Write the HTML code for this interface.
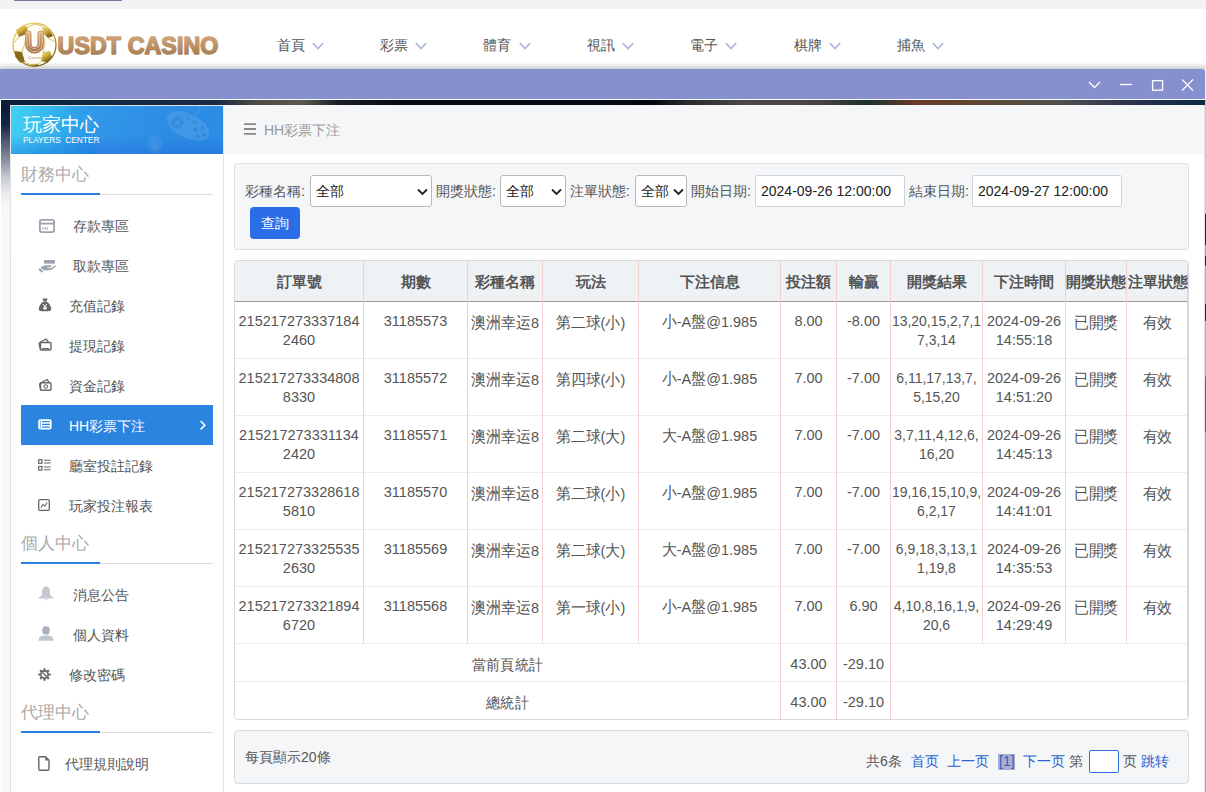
<!DOCTYPE html>
<html><head><meta charset="utf-8">
<style>
*{box-sizing:border-box;margin:0;padding:0}
html,body{width:1206px;height:792px;overflow:hidden;background:#fff;font-family:"Liberation Sans",sans-serif;color:#555;position:relative}
.a{position:absolute}
.nav{position:absolute;top:36px;font-size:14px;color:#555;line-height:18px;white-space:nowrap}
.chev{position:absolute;top:42px;width:12px;height:8px}
.side-t{position:absolute;left:21px;font-size:17px;color:#aaa;line-height:20px;white-space:nowrap}
.uline{position:absolute;left:21px;width:192px;height:1px;background:#dcdcdc}
.uline i{position:absolute;left:0;top:-1px;width:79px;height:2px;background:#2a7fe0}
.mi{position:absolute;font-size:14px;color:#555;line-height:17px;white-space:nowrap}
.ic{position:absolute}
.ic svg{display:block}
.cell{position:absolute;text-align:center;font-size:15.5px;line-height:19px;color:#555;white-space:nowrap;transform:scaleX(.935)}
.hd{position:absolute;text-align:center;font-size:15px;font-weight:bold;color:#555;line-height:18px;white-space:nowrap}
.vl{position:absolute;width:1px;background:#f5cfcf}
.hl{position:absolute;height:1px;background:#ececec}
.lbl{position:absolute;top:182px;font-size:14px;color:#555;line-height:18px;white-space:nowrap}
.sel{position:absolute;top:175px;height:32px;border:1px solid #b9b9b9;border-radius:3px;background:#fff;font-size:14px;color:#222;line-height:30px;padding-left:5px;white-space:nowrap}
.sel svg{position:absolute;top:12px}
.pg{position:absolute;top:752px;font-size:14px;line-height:18px;white-space:nowrap;color:#555}
.lk{color:#2d5fd0}
</style></head><body>

<div class="a" style="left:0;top:0;width:1206px;height:9px;background:#f2f2f2"></div>
<div class="a" style="left:14px;top:0;width:108px;height:1px;background:#717899"></div>
<div class="a" style="left:0;top:62px;width:1206px;height:7px;background:linear-gradient(#fff,#e6e6e6)"></div>
<svg class="a" style="left:11px;top:21px" width="48" height="48" viewBox="0 0 48 48">
<defs>
<linearGradient id="gold" x1="0" y1="0" x2="0.6" y2="1"><stop offset="0" stop-color="#f0d878"/><stop offset="0.5" stop-color="#d2b040"/><stop offset="1" stop-color="#6e5212"/></linearGradient>
<linearGradient id="ug" x1="0" y1="0" x2="0" y2="1"><stop offset="0" stop-color="#d9a67c"/><stop offset="1" stop-color="#a67850"/></linearGradient>
<linearGradient id="tg" x1="0" y1="0" x2="0" y2="1"><stop offset="0" stop-color="#d8a97e"/><stop offset="1" stop-color="#9e764e"/></linearGradient>
</defs>
<circle cx="23.5" cy="23.7" r="21.5" fill="#fffef6" stroke="url(#gold)" stroke-width="1.2"/>
<g fill="url(#gold)">
<path d="M5 9 L12 4.5 L17 6 L15 13 L8 16 Z"/>
<path d="M31 5 L38 8.5 L42 15 L37 17 L32 12 Z"/>
<path d="M3.5 30 L11 31 L14 41 L9 41.5 L4.5 36 Z" fill="#8a6a1c"/>
<path d="M32 31 L39 30 L41 36 L36.5 41.5 L30 40 Z"/>
<path d="M18 43 L28 42.5 L27 45.3 L20 45.3 Z"/>
</g>
<g stroke="#d8bb58" stroke-width="0.9" fill="none">
<path d="M17 6 L24 3 L31 5 M15 13 L14 22 M32 12 L34 22 M8 16 L3 22 M37 17 L44 21 M11 31 L14 22 M34 22 L32 31 M14 41 L18 43 M28 42.5 L30 40"/>
</g>
<path d="M17.3 12.8 V23 A6.2 6.2 0 0 0 29.7 23 V12.8" fill="none" stroke="url(#ug)" stroke-width="6.6" stroke-linecap="round"/>
<path d="M17.3 12.8 V23 A6.2 6.2 0 0 0 29.7 23 V12.8" fill="none" stroke="#f2d9bc" stroke-width="3.4" stroke-linecap="round"/>
<path d="M17.3 12.8 V23 A6.2 6.2 0 0 0 29.7 23 V12.8" fill="none" stroke="url(#ug)" stroke-width="2.2" stroke-linecap="round"/>
<text x="23.5" y="37.5" font-size="4.2" fill="#b08860" text-anchor="middle" font-family="Liberation Sans">Casino</text>
</svg>
<svg class="a" style="left:55px;top:30px" width="175" height="30" viewBox="0 0 175 30"><text x="2.6" y="24.2" font-family="Liberation Sans" font-size="23.2" font-weight="bold" letter-spacing="0.1" fill="url(#tg)" stroke="url(#tg)" stroke-width="1.5" stroke-linejoin="round">USDT CASINO</text></svg>
<div class="nav" style="left:276.5px">首頁</div>
<svg class="chev" style="left:311.7px" viewBox="0 0 12 8"><path d="M0.8 1 L6 6.5 L11.2 1" fill="none" stroke="#aab4d6" stroke-width="1.6"/></svg>
<div class="nav" style="left:379.9px">彩票</div>
<svg class="chev" style="left:415.1px" viewBox="0 0 12 8"><path d="M0.8 1 L6 6.5 L11.2 1" fill="none" stroke="#aab4d6" stroke-width="1.6"/></svg>
<div class="nav" style="left:483.3px">體育</div>
<svg class="chev" style="left:518.5px" viewBox="0 0 12 8"><path d="M0.8 1 L6 6.5 L11.2 1" fill="none" stroke="#aab4d6" stroke-width="1.6"/></svg>
<div class="nav" style="left:586.7px">視訊</div>
<svg class="chev" style="left:621.9px" viewBox="0 0 12 8"><path d="M0.8 1 L6 6.5 L11.2 1" fill="none" stroke="#aab4d6" stroke-width="1.6"/></svg>
<div class="nav" style="left:690.1px">電子</div>
<svg class="chev" style="left:725.3px" viewBox="0 0 12 8"><path d="M0.8 1 L6 6.5 L11.2 1" fill="none" stroke="#aab4d6" stroke-width="1.6"/></svg>
<div class="nav" style="left:793.5px">棋牌</div>
<svg class="chev" style="left:828.7px" viewBox="0 0 12 8"><path d="M0.8 1 L6 6.5 L11.2 1" fill="none" stroke="#aab4d6" stroke-width="1.6"/></svg>
<div class="nav" style="left:896.9px">捕魚</div>
<svg class="chev" style="left:932.1px" viewBox="0 0 12 8"><path d="M0.8 1 L6 6.5 L11.2 1" fill="none" stroke="#aab4d6" stroke-width="1.6"/></svg>
<div class="a" style="left:0;top:69px;width:1205px;height:30px;background:#8690cf;border-radius:0 3px 0 0;box-shadow:0 -2px 5px rgba(0,0,0,0.12)"></div>
<div class="a" style="left:0;top:99px;width:1205px;height:1px;background:#fff"></div>
<svg class="a" style="left:1086px;top:78px" width="112" height="14" viewBox="0 0 112 14"><path d="M3 4 L8.5 9.5 L14 4" fill="none" stroke="#fff" stroke-width="1.3"/><path d="M34 6.5 L46 6.5" stroke="#fff" stroke-width="1.3"/><rect x="66.6" y="2.6" width="10" height="9.6" fill="none" stroke="#fff" stroke-width="1.3"/><path d="M96 1.5 L107 12.5 M107 1.5 L96 12.5" stroke="#fff" stroke-width="1.2"/></svg>
<div class="a" style="left:1px;top:100px;width:1204px;height:5px;background:linear-gradient(90deg,#0a1e3a 0%,#0b2846 6%,#13284a 12%,#1a2a48 18%,#4a4a44 21%,#5a5a4e 25%,#1a1e2a 28%,#060b18 33%,#060a18 50%,#050510 54%,#2a2a30 57%,#4a4a48 62%,#4a4242 68%,#1a3030 72%,#6a3a28 76%,#5a4a3a 83%,#505050 88%,#2a3050 94%,#0a2a4a 100%)"></div>
<div class="a" style="left:1px;top:105px;width:9px;height:687px;background:linear-gradient(#0a1a3a 0%,#14264a 2.9%,#4a5570 5.1%,#8890a0 8%,#c8ccd4 10.6%,#eceef0 13.1%,#f7f7f8 15%,#f8f8f8 100%)"></div>
<div class="a" style="left:10px;top:105px;width:214px;height:687px;background:#fff;border:1px solid #e3e3e3;border-bottom:none"></div>
<div class="a" style="left:11px;top:106px;width:212px;height:48px;overflow:hidden;background:linear-gradient(100deg,#42d2f5 0%,#32b0ee 22%,#2a93e8 40%,#2489e4 70%,#2388e4 100%)">
<div class="a" style="left:0;top:0;width:212px;height:48px;background:linear-gradient(rgba(255,255,255,0) 60%,rgba(20,90,210,0.35) 100%)"></div>
<div class="a" style="left:90px;top:-40px;width:200px;height:140px;transform:rotate(-25deg);background:rgba(255,255,255,0.04)"></div>
<svg class="a" style="left:0;top:0" width="212" height="48" viewBox="0 0 212 48">
<g transform="rotate(27 177 20)"><ellipse cx="177" cy="20" rx="23" ry="12" fill="#ffffff" fill-opacity="0.1"/></g>
<circle cx="166.4" cy="16.3" r="6" fill="#1a6fd8" fill-opacity="0.35"/>
<path d="M163 13 L170 19.6 M170 13 L163 19.6" stroke="#ffffff" stroke-opacity="0.12" stroke-width="1.5"/>
<path d="M176 12 L179 14 M182 15 L185 17" stroke="#1a6fd8" stroke-opacity="0.35" stroke-width="1.6"/>
<g fill="#1a6fd8" fill-opacity="0.35"><circle cx="184.3" cy="23.5" r="2"/><circle cx="191.3" cy="21.8" r="2"/><circle cx="186.5" cy="30.6" r="2"/><circle cx="193" cy="29" r="2"/></g>
<path d="M183 9 C184 6 188 8 189 5 C190 3 188 2 186 1" fill="none" stroke="#ffffff" stroke-opacity="0.15" stroke-width="1"/>
<circle cx="144" cy="38.6" r="8.5" fill="#ffffff" fill-opacity="0.06"/>
<circle cx="144" cy="40" r="4" fill="#ffffff" fill-opacity="0.05"/>
</svg>
<div class="a" style="left:12px;top:9px;font-size:18.5px;color:#fff;line-height:20px;white-space:nowrap">玩家中心</div>
<div class="a" style="left:12px;top:29px;font-size:8.3px;color:#fff;line-height:10px;letter-spacing:0px;white-space:nowrap">PLAYERS&nbsp;&nbsp;CENTER</div>
</div>
<div class="side-t" style="top:165px">財務中心</div>
<div class="uline" style="top:194px"><i></i></div>
<div class="side-t" style="top:534px">個人中心</div>
<div class="uline" style="top:563px"><i></i></div>
<div class="side-t" style="top:703px">代理中心</div>
<div class="uline" style="top:732px"><i></i></div>
<div class="a" style="left:21px;top:405px;width:192px;height:40px;background:#2a84e0"></div>
<div class="ic" style="left:39px;top:219px"><svg width="16" height="14" viewBox="0 0 16 14"><rect x="0.9" y="0.9" width="14.2" height="12.2" rx="2" fill="none" stroke="#9aa3ad" stroke-width="1.8"/><path d="M1 4.6 H15" stroke="#9aa3ad" stroke-width="1.8"/><path d="M3.8 8 V10.8 M6 8 V10.8 M8.2 8 V10.8" stroke="#9aa3ad" stroke-width="1"/></svg></div>
<div class="mi" style="left:73px;top:218px;color:#555">存款專區</div>
<div class="ic" style="left:38px;top:259px"><svg width="18" height="14" viewBox="0 0 18 14"><rect x="6" y="1" width="11" height="3.6" fill="#9aa3ad"/><path d="M0.3 10.6 L1.8 9.1 L5.2 12.3 L3.7 13.8 Z" fill="#9aa3ad"/><path d="M2.6 8.6 C5 6.3 8 6 11 6.2 L12.8 6.5 C13.9 6.8 13.8 8.1 12.7 8.2 L9 8.3 L9.6 9.2 L13.8 8.9 L17.2 6.4 C17.8 6 18.3 6.6 17.8 7.3 C16 9.6 14 11 11 11.2 L5.6 11.3 Z" fill="#9aa3ad"/></svg></div>
<div class="mi" style="left:73px;top:258px;color:#555">取款專區</div>
<div class="ic" style="left:38px;top:298px"><svg width="14" height="14" viewBox="0 0 14 14"><path d="M4.3 0.6 H9.7 L8.4 3.2 H5.6 Z" fill="#666"/><path d="M5.5 3.6 H8.5 C11.5 5.5 13.2 8.5 13.2 11 C13.2 13 12 13.3 7 13.3 C2 13.3 0.8 13 0.8 11 C0.8 8.5 2.5 5.5 5.5 3.6 Z" fill="#666"/><path d="M5 6 L7 8.3 L9 6 M7 8.3 V12 M5.2 9.2 H8.8 M5.2 10.6 H8.8" fill="none" stroke="#fff" stroke-width="1"/></svg></div>
<div class="mi" style="left:69px;top:298px;color:#555">充值記錄</div>
<div class="ic" style="left:38px;top:338px"><svg width="14" height="13" viewBox="0 0 14 13"><path d="M1 5 L8 1 L10.5 4" fill="none" stroke="#666" stroke-width="1.3"/><rect x="2.5" y="4.5" width="10.5" height="7.5" rx="1" fill="none" stroke="#666" stroke-width="1.4"/><path d="M1 5 L2.5 12" stroke="#666" stroke-width="1.3"/><rect x="4" y="10" width="7" height="1.3" fill="#666"/></svg></div>
<div class="mi" style="left:69px;top:338px;color:#555">提現記錄</div>
<div class="ic" style="left:38px;top:378px"><svg width="14" height="13" viewBox="0 0 14 13"><path d="M1.5 5.5 L9 1.5 L11 4" fill="none" stroke="#666" stroke-width="1.3"/><rect x="2.5" y="4.8" width="10.5" height="7.5" rx="1" fill="none" stroke="#666" stroke-width="1.4"/><circle cx="7.7" cy="8.5" r="1.8" fill="none" stroke="#666" stroke-width="1.1"/><path d="M1.5 5.5 L2.5 12" stroke="#666" stroke-width="1.2"/></svg></div>
<div class="mi" style="left:69px;top:378px;color:#555">資金記錄</div>
<div class="ic" style="left:38px;top:419px"><svg width="14" height="11" viewBox="0 0 14 11"><rect x="0.2" y="0.2" width="13.4" height="10.4" rx="2" fill="#fff"/><path d="M4 2.6 H11.8 M4 5.4 H11.8 M4 8.2 H11.8" stroke="#2a84e0" stroke-width="1.2"/><path d="M2.6 1.5 V9.5" stroke="#2a84e0" stroke-width="0.6"/></svg></div>
<div class="mi" style="left:69px;top:418px;color:#fff">HH彩票下注</div>
<div class="ic" style="left:38px;top:459px"><svg width="13" height="12" viewBox="0 0 13 12"><rect x="0.7" y="0.7" width="3.2" height="3.6" fill="none" stroke="#666" stroke-width="1.2"/><rect x="0.7" y="7.5" width="3.2" height="3.6" fill="none" stroke="#666" stroke-width="1.2"/><path d="M6 1.3 H12.5 M6 4 H12.5 M6 8 H12.5 M6 10.8 H12.5" stroke="#666" stroke-width="1.1"/></svg></div>
<div class="mi" style="left:69px;top:458px;color:#555">廳室投註記錄</div>
<div class="ic" style="left:38px;top:499px"><svg width="12" height="12" viewBox="0 0 12 12"><rect x="0.7" y="0.7" width="10.6" height="10.6" rx="1" fill="none" stroke="#666" stroke-width="1.3"/><path d="M2.8 8.8 L5 5.5 L6.8 7.2 L9.2 3.5" fill="none" stroke="#666" stroke-width="1.1"/></svg></div>
<div class="mi" style="left:69px;top:498px;color:#555">玩家投注報表</div>
<div class="ic" style="left:38px;top:586px"><svg width="16" height="15" viewBox="0 0 16 15"><path d="M8 0.6 C5 0.6 4 3 4 6 L4 9.3 L0.6 11.8 V12.6 H15.4 V11.8 L12 9.3 L12 6 C12 3 11 0.6 8 0.6 Z" fill="#c3c8ce"/><path d="M6.3 13.3 H9.7 L8 14.6 Z" fill="#c3c8ce"/></svg></div>
<div class="mi" style="left:73px;top:587px;color:#555">消息公告</div>
<div class="ic" style="left:38px;top:626px"><svg width="16" height="15" viewBox="0 0 16 15"><ellipse cx="8" cy="4.4" rx="3.8" ry="4.2" fill="#a9b0b9"/><path d="M0.5 14.8 C0.5 10.5 3.5 9.5 8 9.5 C12.5 9.5 15.5 10.5 15.5 14.8 Z" fill="#c0c6cd"/></svg></div>
<div class="mi" style="left:73px;top:627px;color:#555">個人資料</div>
<div class="ic" style="left:38px;top:668px"><svg width="13" height="13" viewBox="0 0 13 13"><g fill="#666"><rect x="5.4" y="0.2" width="2.2" height="12.6" rx="0.6"/><rect x="0.2" y="5.4" width="12.6" height="2.2" rx="0.6"/><rect x="5.4" y="0.2" width="2.2" height="12.6" rx="0.6" transform="rotate(45 6.5 6.5)"/><rect x="5.4" y="0.2" width="2.2" height="12.6" rx="0.6" transform="rotate(-45 6.5 6.5)"/></g><circle cx="6.5" cy="6.5" r="3.6" fill="#fff" stroke="#666" stroke-width="1.6"/><path d="M4.6 4.6 L8.6 8.6" stroke="#666" stroke-width="1.4"/></svg></div>
<div class="mi" style="left:69px;top:667px;color:#555">修改密碼</div>
<div class="ic" style="left:38px;top:756px"><svg width="12" height="15" viewBox="0 0 12 15"><path d="M1.8 0.8 H7.5 L11 4.3 V13 A1.2 1.2 0 0 1 9.8 14.2 H2 A1.2 1.2 0 0 1 0.8 13 V2 A1.2 1.2 0 0 1 1.8 0.8 Z" fill="none" stroke="#666" stroke-width="1.4"/><path d="M7.3 0.8 V4.5 H11" fill="#666"/></svg></div>
<div class="mi" style="left:65px;top:756px;color:#555">代理規則說明</div>
<svg class="a" style="left:199px;top:419px" width="8" height="12" viewBox="0 0 8 12"><path d="M1.6 2 L5.8 6.2 L1.6 10.4" fill="none" stroke="#fff" stroke-width="1.6"/></svg>
<div class="a" style="left:224px;top:105px;width:981px;height:49px;background:#f5f6f8"></div>
<svg class="a" style="left:244px;top:123px" width="12" height="12" viewBox="0 0 12 12"><path d="M0 1.2 H12 M0 6 H12 M0 10.8 H12" stroke="#888" stroke-width="1.8"/></svg>
<div class="a" style="left:264px;top:121px;font-size:14px;color:#999;line-height:18px;white-space:nowrap">HH彩票下注</div>
<div class="a" style="left:234px;top:163px;width:955px;height:87px;background:#f5f6f8;border:1px solid #dcdfe3;border-radius:3px"></div>
<div class="lbl" style="left:245px">彩種名稱:</div>
<div class="sel" style="left:310px;width:122px">全部<svg style="left:106px" width="11" height="8" viewBox="0 0 11 8"><path d="M1 1.5 L5.5 6 L10 1.5" fill="none" stroke="#222" stroke-width="1.8"/></svg></div>
<div class="lbl" style="left:436px">開獎狀態:</div>
<div class="sel" style="left:500px;width:66px">全部<svg style="left:50px" width="11" height="8" viewBox="0 0 11 8"><path d="M1 1.5 L5.5 6 L10 1.5" fill="none" stroke="#222" stroke-width="1.8"/></svg></div>
<div class="lbl" style="left:570px">注單狀態:</div>
<div class="sel" style="left:635px;width:52px">全部<svg style="left:37px" width="11" height="8" viewBox="0 0 11 8"><path d="M1 1.5 L5.5 6 L10 1.5" fill="none" stroke="#222" stroke-width="1.8"/></svg></div>
<div class="lbl" style="left:691px">開始日期:</div>
<div class="sel" style="left:755px;width:150px;border-color:#ced4da;border-radius:2px">2024-09-26 12:00:00</div>
<div class="lbl" style="left:909px">結束日期:</div>
<div class="sel" style="left:972px;width:150px;border-color:#ced4da;border-radius:2px">2024-09-27 12:00:00</div>
<div class="a" style="left:250px;top:207px;width:50px;height:32px;background:#2b6de6;border-radius:4px;color:#fff;font-size:14px;line-height:32px;text-align:center">查詢</div>
<div class="a" style="left:234px;top:260px;width:955px;height:460px;border:1px solid #d5dadf;border-radius:4px;background:#fff"></div>
<div class="a" style="left:235px;top:261px;width:953px;height:40px;background:#eef2f5;border-radius:3px 3px 0 0"></div>
<div class="a" style="left:235px;top:301px;width:953px;height:1px;background:#9e9696"></div>
<div class="hl" style="left:235px;top:358px;width:953px"></div>
<div class="hl" style="left:235px;top:415px;width:953px"></div>
<div class="hl" style="left:235px;top:472px;width:953px"></div>
<div class="hl" style="left:235px;top:529px;width:953px"></div>
<div class="hl" style="left:235px;top:586px;width:953px"></div>
<div class="hl" style="left:235px;top:643px;width:953px"></div>
<div class="hl" style="left:235px;top:681px;width:953px"></div>
<div class="vl" style="left:363px;top:261px;height:382px"></div>
<div class="vl" style="left:467px;top:261px;height:382px"></div>
<div class="vl" style="left:542px;top:261px;height:382px"></div>
<div class="vl" style="left:638px;top:261px;height:382px"></div>
<div class="vl" style="left:780px;top:261px;height:458px"></div>
<div class="vl" style="left:836px;top:261px;height:458px"></div>
<div class="vl" style="left:890px;top:261px;height:458px"></div>
<div class="vl" style="left:982px;top:261px;height:382px"></div>
<div class="vl" style="left:1065px;top:261px;height:382px"></div>
<div class="vl" style="left:1126px;top:261px;height:382px"></div>
<div class="vl" style="left:1187px;top:265px;height:451px"></div>
<div class="hd" style="left:235px;width:128px;top:273px">訂單號</div>
<div class="hd" style="left:364px;width:103px;top:273px">期數</div>
<div class="hd" style="left:468px;width:74px;top:273px">彩種名稱</div>
<div class="hd" style="left:543px;width:95px;top:273px">玩法</div>
<div class="hd" style="left:639px;width:141px;top:273px">下注信息</div>
<div class="hd" style="left:781px;width:55px;top:273px">投注額</div>
<div class="hd" style="left:837px;width:53px;top:273px">輸贏</div>
<div class="hd" style="left:891px;width:91px;top:273px">開獎結果</div>
<div class="hd" style="left:983px;width:82px;top:273px">下注時間</div>
<div class="hd" style="left:1066px;width:60px;top:273px">開獎狀態</div>
<div class="hd" style="left:1127px;width:61px;top:273px">注單狀態</div>
<div class="cell" style="left:225px;width:148px;top:311.3px">215217273337184<br>2460</div>
<div class="cell" style="left:354px;width:123px;top:311.3px">31185573</div>
<div class="cell" style="left:458px;width:94px;top:312.8px">澳洲幸运8</div>
<div class="cell" style="left:533px;width:115px;top:312.8px">第二球(小)</div>
<div class="cell" style="left:629px;width:161px;top:311.8px">小-A盤@1.985</div>
<div class="cell" style="left:771px;width:75px;top:311.3px">8.00</div>
<div class="cell" style="left:827px;width:73px;top:311.3px">-8.00</div>
<div class="cell" style="left:881px;width:111px;top:311.3px;transform:scaleX(.9)">13,20,15,2,7,1<br>7,3,14</div>
<div class="cell" style="left:973px;width:102px;top:311.3px">2024-09-26<br>14:55:18</div>
<div class="cell" style="left:1056px;width:80px;top:312.8px">已開獎</div>
<div class="cell" style="left:1117px;width:81px;top:312.8px">有效</div>
<div class="cell" style="left:225px;width:148px;top:368.3px">215217273334808<br>8330</div>
<div class="cell" style="left:354px;width:123px;top:368.3px">31185572</div>
<div class="cell" style="left:458px;width:94px;top:369.8px">澳洲幸运8</div>
<div class="cell" style="left:533px;width:115px;top:369.8px">第四球(小)</div>
<div class="cell" style="left:629px;width:161px;top:368.8px">小-A盤@1.985</div>
<div class="cell" style="left:771px;width:75px;top:368.3px">7.00</div>
<div class="cell" style="left:827px;width:73px;top:368.3px">-7.00</div>
<div class="cell" style="left:881px;width:111px;top:368.3px;transform:scaleX(.9)">6,11,17,13,7,<br>5,15,20</div>
<div class="cell" style="left:973px;width:102px;top:368.3px">2024-09-26<br>14:51:20</div>
<div class="cell" style="left:1056px;width:80px;top:369.8px">已開獎</div>
<div class="cell" style="left:1117px;width:81px;top:369.8px">有效</div>
<div class="cell" style="left:225px;width:148px;top:425.3px">215217273331134<br>2420</div>
<div class="cell" style="left:354px;width:123px;top:425.3px">31185571</div>
<div class="cell" style="left:458px;width:94px;top:426.8px">澳洲幸运8</div>
<div class="cell" style="left:533px;width:115px;top:426.8px">第二球(大)</div>
<div class="cell" style="left:629px;width:161px;top:425.8px">大-A盤@1.985</div>
<div class="cell" style="left:771px;width:75px;top:425.3px">7.00</div>
<div class="cell" style="left:827px;width:73px;top:425.3px">-7.00</div>
<div class="cell" style="left:881px;width:111px;top:425.3px;transform:scaleX(.9)">3,7,11,4,12,6,<br>16,20</div>
<div class="cell" style="left:973px;width:102px;top:425.3px">2024-09-26<br>14:45:13</div>
<div class="cell" style="left:1056px;width:80px;top:426.8px">已開獎</div>
<div class="cell" style="left:1117px;width:81px;top:426.8px">有效</div>
<div class="cell" style="left:225px;width:148px;top:482.3px">215217273328618<br>5810</div>
<div class="cell" style="left:354px;width:123px;top:482.3px">31185570</div>
<div class="cell" style="left:458px;width:94px;top:483.8px">澳洲幸运8</div>
<div class="cell" style="left:533px;width:115px;top:483.8px">第二球(小)</div>
<div class="cell" style="left:629px;width:161px;top:482.8px">小-A盤@1.985</div>
<div class="cell" style="left:771px;width:75px;top:482.3px">7.00</div>
<div class="cell" style="left:827px;width:73px;top:482.3px">-7.00</div>
<div class="cell" style="left:881px;width:111px;top:482.3px;transform:scaleX(.9)">19,16,15,10,9,<br>6,2,17</div>
<div class="cell" style="left:973px;width:102px;top:482.3px">2024-09-26<br>14:41:01</div>
<div class="cell" style="left:1056px;width:80px;top:483.8px">已開獎</div>
<div class="cell" style="left:1117px;width:81px;top:483.8px">有效</div>
<div class="cell" style="left:225px;width:148px;top:539.3px">215217273325535<br>2630</div>
<div class="cell" style="left:354px;width:123px;top:539.3px">31185569</div>
<div class="cell" style="left:458px;width:94px;top:540.8px">澳洲幸运8</div>
<div class="cell" style="left:533px;width:115px;top:540.8px">第二球(大)</div>
<div class="cell" style="left:629px;width:161px;top:539.8px">大-A盤@1.985</div>
<div class="cell" style="left:771px;width:75px;top:539.3px">7.00</div>
<div class="cell" style="left:827px;width:73px;top:539.3px">-7.00</div>
<div class="cell" style="left:881px;width:111px;top:539.3px;transform:scaleX(.9)">6,9,18,3,13,1<br>1,19,8</div>
<div class="cell" style="left:973px;width:102px;top:539.3px">2024-09-26<br>14:35:53</div>
<div class="cell" style="left:1056px;width:80px;top:540.8px">已開獎</div>
<div class="cell" style="left:1117px;width:81px;top:540.8px">有效</div>
<div class="cell" style="left:225px;width:148px;top:596.3px">215217273321894<br>6720</div>
<div class="cell" style="left:354px;width:123px;top:596.3px">31185568</div>
<div class="cell" style="left:458px;width:94px;top:597.8px">澳洲幸运8</div>
<div class="cell" style="left:533px;width:115px;top:597.8px">第一球(小)</div>
<div class="cell" style="left:629px;width:161px;top:596.8px">小-A盤@1.985</div>
<div class="cell" style="left:771px;width:75px;top:596.3px">7.00</div>
<div class="cell" style="left:827px;width:73px;top:596.3px">6.90</div>
<div class="cell" style="left:881px;width:111px;top:596.3px;transform:scaleX(.9)">4,10,8,16,1,9,<br>20,6</div>
<div class="cell" style="left:973px;width:102px;top:596.3px">2024-09-26<br>14:29:49</div>
<div class="cell" style="left:1056px;width:80px;top:597.8px">已開獎</div>
<div class="cell" style="left:1117px;width:81px;top:597.8px">有效</div>
<div class="cell" style="left:235px;width:545px;top:655px;font-size:15px">當前頁統計</div>
<div class="cell" style="left:781px;width:55px;top:654px">43.00</div>
<div class="cell" style="left:837px;width:53px;top:654px">-29.10</div>
<div class="cell" style="left:235px;width:545px;top:693px;font-size:15px">總統計</div>
<div class="cell" style="left:781px;width:55px;top:692px">43.00</div>
<div class="cell" style="left:837px;width:53px;top:692px">-29.10</div>
<div class="a" style="left:234px;top:730px;width:955px;height:54px;background:#f5f6f8;border:1px solid #d5dadf;border-radius:4px"></div>
<div class="pg" style="left:245px;top:748px">每頁顯示20條</div>
<div class="pg" style="left:866px">共6条</div>
<div class="pg lk" style="left:911px">首页</div>
<div class="pg lk" style="left:947px">上一页</div>
<div class="a" style="left:998px;top:754px;width:17px;height:16px;background:#aab0c9"></div>
<div class="pg lk" style="left:999px">[1]</div>
<div class="pg lk" style="left:1023px">下一页</div>
<div class="pg" style="left:1069px">第</div>
<div class="a" style="left:1089px;top:750px;width:30px;height:23px;border:1px solid #2d6fe0;border-radius:2px;background:#fff"></div>
<div class="pg" style="left:1123px">页</div>
<div class="pg lk" style="left:1141px">跳转</div>
<div class="a" style="left:1204px;top:105px;width:1px;height:687px;background:#e2e2e2"></div>
<div class="a" style="left:1205px;top:99px;width:1px;height:693px;background:linear-gradient(#c8c8c8 0%,#c8c8c8 16.5%,#2a2a30 16.6%,#2a2a30 21%,#a0a0a0 21.1%,#a0a0a0 22.6%,#2a2a30 22.7%,#2a2a30 24%,#b0b0b0 24.1%,#b0b0b0 29.5%,#2a2a30 29.6%,#2a2a30 32%,#b0b0b0 32.1%,#b0b0b0 40%,#3070b0 40.1%,#3070b0 48%,#a8a8a8 48.1%,#a8a8a8 100%)"></div>
</body></html>
